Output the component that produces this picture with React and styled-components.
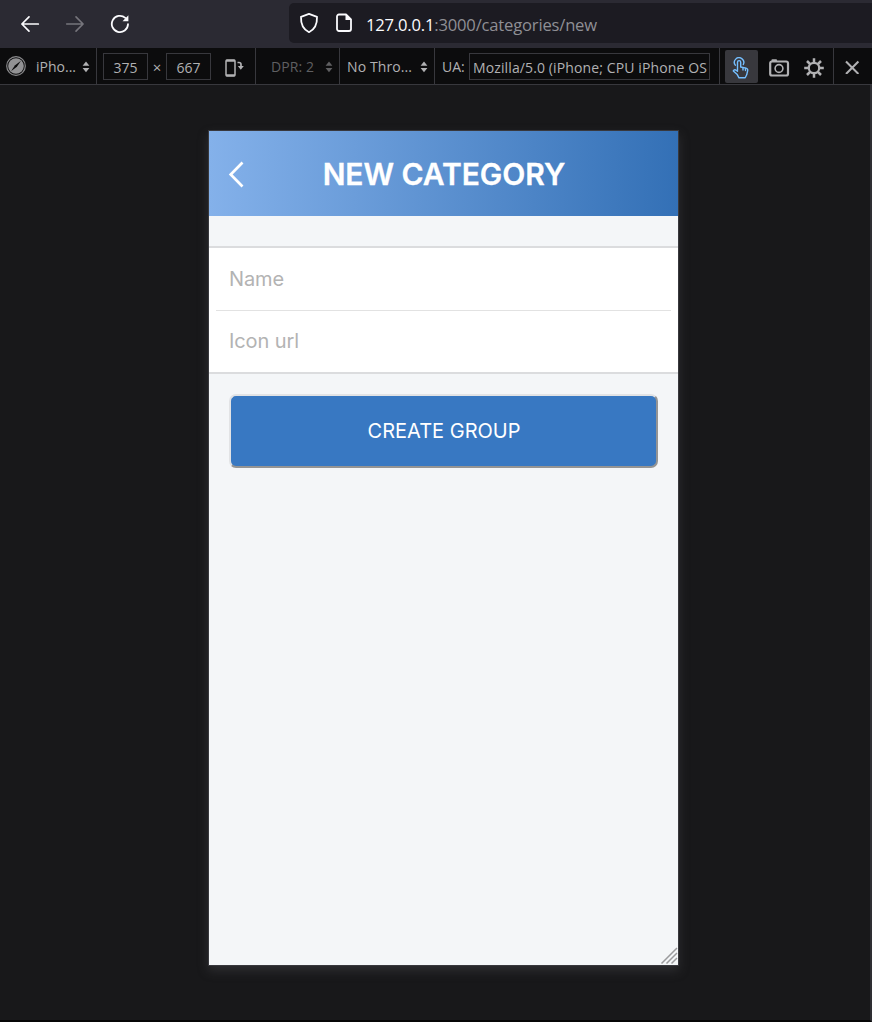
import React from "react";
import styled, { createGlobalStyle } from "styled-components";

const GlobalStyle = createGlobalStyle`
  * { box-sizing: border-box; }
  body { margin: 0; background: #18181a; }
`;

const Window = styled.div`
  width: 872px;
  height: 1022px;
  display: flex;
  flex-direction: column;
  overflow: hidden;
  background: #18181a;
  font-family: "Open Sans", "Noto Sans", sans-serif;
`;

const NavBar = styled.header`
  flex: none;
  height: 48px;
  display: flex;
  align-items: center;
  padding-left: 20px;
  background: #2b2a33;
`;

const NavButton = styled.span`
  width: 20px;
  height: 20px;
  margin-right: 25px;
  color: ${(p) => (p.$disabled ? "#76757c" : "#fbfbfe")};
  svg { display: block; }
`;

const AddressBar = styled.div`
  flex: 1;
  height: 40px;
  margin: -2px 0 0 134px;
  padding-left: 10px;
  display: flex;
  align-items: center;
  gap: 17px;
  border-radius: 5px 0 0 5px;
  background: #1c1b22;
  color: #fbfbfe;
  svg { display: block; flex: none; }
`;

const Url = styled.div`
  margin: 3px 0 0 -4px;
  font-size: 16.6px;
  line-height: 24px;
  letter-spacing: -0.19px;
  color: #8f8f95;
  white-space: nowrap;
  b { font-weight: 400; color: #fbfbfe; }
`;

const ToolBar = styled.div`
  flex: none;
  height: 37px;
  display: flex;
  background: #0c0c0d;
  border-bottom: 1px solid #38383d;
  color: #b1b1b3;
  font-size: 14px;
  line-height: 20px;
  white-space: nowrap;
`;

const Section = styled.div`
  flex: none;
  width: ${(p) => p.$w}px;
  height: 36px;
  display: flex;
  align-items: center;
  padding-left: ${(p) => p.$pl || 0}px;
  padding-top: 2px;
  border-right: ${(p) => (p.$last ? "0" : "1px solid #38383d")};
  color: ${(p) => (p.$dim ? "#5f5f61" : "inherit")};
  svg { display: block; flex: none; }
`;

const Label = styled.span`
  width: ${(p) => p.$w}px;
  margin-left: ${(p) => p.$ml || 0}px;
  letter-spacing: ${(p) => p.$ls || 0}px;
`;

const Field = styled.div`
  width: ${(p) => p.$w}px;
  height: 27px;
  margin-top: -2px;
  padding: 4px 0 0 ${(p) => (p.$left ? 3 : 0)}px;
  border: 1px solid #38383d;
  text-align: ${(p) => (p.$left ? "left" : "center")};
  letter-spacing: ${(p) => p.$ls || 0}px;
  overflow: hidden;
`;

const Times = styled.span`
  width: 18px;
  text-align: center;
  font-size: 15px;
`;

const Rotate = styled.span`
  margin: 2px 0 0 14px;
`;

const ToolButton = styled.span`
  width: 33px;
  height: 33px;
  margin: -1px ${(p) => (p.$active ? 4 : 2)}px 0 0;
  padding: ${(p) => (p.$active ? "3px 1px 0 0" : "3px 0 0")};
  display: flex;
  align-items: center;
  justify-content: center;
  border-radius: 2px;
  background: ${(p) => (p.$active ? "#38383d" : "transparent")};
  color: ${(p) => (p.$active ? "#75bfff" : "#b1b1b3")};
`;

const Stage = styled.main`
  flex: 1;
  display: flex;
  justify-content: center;
  align-items: flex-start;
  padding: 45px 0 0 16px;
  border-right: 2px solid #2e2e33;
  border-bottom: 2px solid #060607;
`;

const Phone = styled.div`
  width: 471px;
  height: 836px;
  display: flex;
  flex-direction: column;
  border: 1px solid #38383d;
  background: #f4f6f8;
  box-shadow: 0 5px 10px rgba(70, 70, 76, 0.45);
  font-family: Inter, sans-serif;
`;

const PageHeader = styled.div`
  flex: none;
  height: 85px;
  display: grid;
  grid-template-columns: 57px 1fr 55px;
  align-items: center;
  background: linear-gradient(90deg, #84b1ea, #3370b6);
  color: #fff;
  svg { display: block; margin-left: 19px; }
`;

const Title = styled.h1`
  margin: 0;
  text-align: center;
  font-size: 30px;
  line-height: 36px;
  font-weight: 600;
  letter-spacing: -0.05px;
  -webkit-text-stroke: 0.3px #fff;
  white-space: nowrap;
`;

const Form = styled.div`
  flex: none;
  margin-top: 30px;
  padding: 0 7px;
  height: 128px;
  border: solid #dbdcde;
  border-width: 2px 0;
  background: #fff;
`;

const FormRow = styled.div`
  height: ${(p) => (p.$divided ? 63 : 60)}px;
  padding-left: 13.4px;
  display: flex;
  align-items: center;
  border-bottom: ${(p) => (p.$divided ? "1px solid #e2e2e2" : "0")};
  font-size: 20px;
  letter-spacing: -0.06px;
  color: #b3b3b3;
`;

const Submit = styled.button`
  flex: none;
  width: 429px;
  height: 74px;
  margin: 20px 0 0 20.5px;
  padding: 0 0 0 1px;
  border: 2px solid;
  border-color: #e2e3e5 #949494 #949494 #e2e3e5;
  border-radius: 7px;
  background: #3878c2;
  color: #fff;
  font-family: inherit;
  font-size: 20px;
`;

const Grip = styled.div`
  margin: auto 0 0 auto;
  svg { display: block; }
`;

const Icon = ({ w, h = w, sw = 2, children }) => (
  <svg width={w} height={h} viewBox={`0 0 ${w} ${h}`} fill="none" stroke="currentColor" strokeWidth={sw} strokeLinecap="round" strokeLinejoin="round">
    {children}
  </svg>
);

const Spinner = () => (
  <svg width="8" height="12" viewBox="0 0 8 12" fill="currentColor">
    <path d="M4 .5 7.4 4.7H.6zM4 11.3.6 7.1h6.8z" />
  </svg>
);

export default function App() {
  return (
    <Window>
      <GlobalStyle />
      <NavBar>
        <NavButton><Icon w={20} sw={1.7}><path d="M18.3 10H2M9 2.9 1.9 10 9 17.1" /></Icon></NavButton>
        <NavButton $disabled><Icon w={20} sw={1.6}><path d="M1.7 10H18M11 2.9 18.1 10 11 17.1" /></Icon></NavButton>
        <NavButton>
          <Icon w={20} sw={1.8}>
            <path d="M18 10.2a8.1 8.1 0 1 1-2.7-6.3" />
            <path d="M18.4 1.3v5.9h-5.9z" fill="currentColor" stroke="none" />
          </Icon>
        </NavButton>
        <AddressBar>
          <Icon w={20} h={22} sw={1.8}>
            <path d="M10 1.8 18 4.8C18.3 12.1 15.5 17.6 10 20.2 4.5 17.6 1.7 12.1 2 4.8z" />
          </Icon>
          <Icon w={17} h={20} sw={1.8}>
            <path d="M3 1.5h7L15 6.5V16a2 2 0 0 1-2 2H3a2 2 0 0 1-2-2V3.5a2 2 0 0 1 2-2z" />
            <path d="M9.5 1.5v5.5h5.5z" fill="currentColor" stroke="none" />
          </Icon>
          <Url><b>127.0.0.1</b>:3000/categories/new</Url>
        </AddressBar>
      </NavBar>

      <ToolBar>
        <Section $w={97} $pl={6}>
          <svg width="20" height="22" viewBox="0 0 20 22">
            <circle cx="10" cy="10" r="9.3" fill="none" stroke="#8a8a8c" strokeWidth="1.2" />
            <circle cx="10" cy="10" r="7.8" fill="#929294" />
            <path d="M15 4.8 10.9 10.8 5 15.2 9.1 9.2z" fill="#0c0c0d" />
          </svg>
          <Label $w={46} $ml={10}>iPho...</Label>
          <Spinner />
        </Section>
        <Section $w={159} $pl={6}>
          <Field $w={45}>375</Field>
          <Times>×</Times>
          <Field $w={45}>667</Field>
          <Rotate>
            <svg width="20" height="20" viewBox="0 0 20 20" fill="none" stroke="currentColor">
              <rect x="1" y="2" width="9" height="16" rx="1" strokeWidth="1.5" />
              <path d="M1 2.8h9M1 17.2h9" strokeWidth="2" />
              <path d="M12.5 4.5h1.5q2 0 2 2V9" strokeWidth="1.7" />
              <path d="M12.8 8h6l-3 3.8z" fill="currentColor" stroke="none" />
            </svg>
          </Rotate>
        </Section>
        <Section $w={84} $pl={15} $dim><Label $w={54} $ls={0.1}>DPR: 2</Label><Spinner /></Section>
        <Section $w={95} $pl={7}><Label $w={73} $ls={0.1}>No Thro...</Label><Spinner /></Section>
        <Section $w={285} $pl={7}>
          <Label $w={27}>UA:</Label>
          <Field $w={241} $left $ls={0.12}>Mozilla/5.0 (iPhone; CPU iPhone OS</Field>
        </Section>
        <Section $w={114} $pl={5}>
          <ToolButton $active>
            <Icon w={18} h={22} sw={1.4}>
              <path d="M5.5 13.5V5.2a1.6 1.6 0 0 1 3.2 0V10l5.3 1.1q2 .5 1.7 2.4l-1 4.3-1.5 3H7L5 17.2l-3.7-3.3q.8-1.6 2.4-.9l1.8 1.3" />
              <path d="M3.3 8.2A4.7 4.7 0 1 1 11.3 7.5M11 11v2M13.5 11.5v2" />
            </Icon>
          </ToolButton>
          <ToolButton>
            <Icon w={22} h={20} sw={2.2}>
              <rect x="2.2" y="3.5" width="17.8" height="14" rx="1.8" />
              <circle cx="11" cy="10.5" r="3.9" strokeWidth="1.6" />
              <path d="M4.5 2.3h3.5" />
            </Icon>
          </ToolButton>
          <ToolButton>
            <Icon w={20} sw={2.5}>
              <circle cx="10" cy="10" r="5.2" strokeWidth="2.2" />
              <path strokeLinecap="butt" d="M10 .2v4M10 15.8v4M.2 10h4M15.8 10h4M3 3l3 3M14 14l3 3M17 3l-3 3M6 14l-3 3" />
            </Icon>
          </ToolButton>
        </Section>
        <Section $w={38} $pl={10} $last>
          <Icon w={16} h={14} sw={2.1}><path strokeLinecap="butt" d="M2 1.5l12.4 12.4M14.4 1.5 2 13.9" /></Icon>
        </Section>
      </ToolBar>

      <Stage>
        <Phone>
          <PageHeader>
            <svg width="18" height="28" viewBox="0 0 18 28" fill="none" stroke="currentColor" strokeWidth="2.7">
              <path d="M14.5 2.5 2.7 14.5l11.8 12" />
            </svg>
            <Title>NEW CATEGORY</Title>
          </PageHeader>
          <Form>
            <FormRow $divided>Name</FormRow>
            <FormRow>Icon url</FormRow>
          </Form>
          <Submit>CREATE GROUP</Submit>
          <Grip>
            <svg width="18" height="18" viewBox="0 0 18 18" stroke="#9b9b9d" strokeWidth="1.5">
              <path d="M1.5 16.5 17 1M6.5 16.5 17 6M11.500 16.5l5.500-5.500" />
            </svg>
          </Grip>
        </Phone>
      </Stage>
    </Window>
  );
}
